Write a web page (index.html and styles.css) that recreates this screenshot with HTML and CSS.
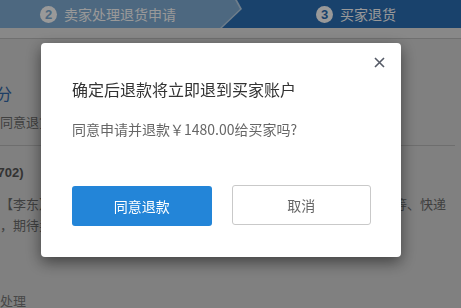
FILE: index.html
```html
<!DOCTYPE html>
<html lang="zh">
<head>
<meta charset="utf-8">
<link rel="stylesheet" href="styles.css">
</head>
<body>
<div class="page">
  <div class="steps">
    <div class="step step-done">
      <span class="num">2</span><span class="label">卖家处理退货申请</span>
    </div>
    <div class="step step-current">
      <span class="num">3</span><span class="label">买家退货</span>
    </div>
  </div>
  <div class="subbar"></div>
  <div class="content">
    <div class="sec-title">买家退货部分</div>
    <div class="note">同意退货申请后，等待买家退货</div>
    <div class="divider"></div>
    <div class="order">订单号(20190702)</div>
    <div class="row">
      <span>【李东】已申请退货，卖家同意后请买家尽快寄回商品</span>
      <span>等、快递</span>
    </div>
    <div class="row">
      <span>，期待卖家确认收货</span>
    </div>
    <div class="foot">处理</div>
  </div>
</div>

<div class="mask"></div>
<div class="dialog">
  <button class="close" aria-label="关闭">
    <svg width="11" height="11" viewBox="0 0 11 11"><path d="M1 1L10 10M10 1L1 10" stroke="#555a66" stroke-width="1.6" fill="none"/></svg>
  </button>
  <div class="title">确定后退款将立即退到买家账户</div>
  <div class="desc">同意申请并退款￥1480.00给买家吗?</div>
  <div class="actions">
    <button class="btn btn-primary">同意退款</button>
    <button class="btn btn-default">取消</button>
  </div>
</div>
</body>
</html>
```

FILE: styles.css
```css
* { box-sizing: border-box; }
html, body { margin: 0; padding: 0; }
body {
  width: 461px;
  height: 308px;
  overflow: hidden;
  background: #d5d5d5;
  font-family: "Noto Sans CJK SC", "Noto Sans", sans-serif;
}
.page { width: 461px; height: 308px; overflow: hidden; }

.steps {
  display: flex;
  height: 28px;
  background: #2a6eb4;
  position: relative;
}
.step {
  display: flex;
  align-items: center;
  height: 28px;
  color: #fff;
  font-size: 14px;
}
.step-done {
  position: relative;
  z-index: 1;
  width: 243px;
  padding-left: 40px;
  background: #b9d2e8;
  clip-path: polygon(0 0, 237px 0, 242px 9px, 222px 28px, 0 28px);
}
.step-done::before {
  content: "";
  position: absolute;
  inset: 0;
  z-index: -1;
  background: #80add5;
  clip-path: polygon(0 0, 235px 0, 240px 9px, 220px 28px, 0 28px);
}
.step-current {
  flex: 1;
  padding-left: 73px;
}
.num {
  width: 17px; height: 17px;
  border-radius: 50%;
  background: #fff;
  color: #80add5;
  font-size: 13px;
  font-weight: 700;
  display: flex; align-items: center; justify-content: center;
  margin-right: 7px;
  font-family: "Liberation Sans", sans-serif;
}
.step-current .num { color: #2a6eb4; }
.label { line-height: 1; }

.subbar {
  height: 11px;
  background: #e3e3e3;
  border-bottom: 1px solid #bbb;
}

.content { width: 461px; }
.sec-title {
  margin-top: 44px;
  margin-left: -84px;
  font-size: 16px;
  color: #3268a8;
  line-height: 20px;
  white-space: nowrap;
}
.note {
  margin-top: 10px;
  font-size: 13px;
  color: #6b6b6b;
  line-height: 18px;
  white-space: nowrap;
}
.divider {
  margin-top: 14px;
  height: 1px;
  width: 455px;
  background: #b8b8b8;
}
.order {
  margin-top: 18px;
  margin-left: -82px;
  font-family: "Liberation Sans", "Noto Sans CJK SC", sans-serif;
  font-size: 13px;
  font-weight: 700;
  color: #555;
  line-height: 18px;
  white-space: nowrap;
}
.row {
  display: flex;
  justify-content: space-between;
  width: 446px;
  font-size: 13px;
  color: #6b6b6b;
  line-height: 21px;
  white-space: nowrap;
}
.order + .row { margin-top: 11px; }
.foot {
  margin-top: 58px;
  font-size: 13px;
  color: #777;
  line-height: 16px;
}

.mask {
  position: fixed;
  inset: 0;
  z-index: 10;
  background: rgba(0,0,0,0.4);
}
.dialog {
  position: fixed;
  z-index: 11;
  left: 41px;
  top: 43px;
  width: 360px;
  height: 214px;
  background: #fff;
  border-radius: 4px;
  box-shadow: 0 5px 15px rgba(0,0,0,0.5);
  padding: 35px 30px 0 31px;
}
.close {
  position: absolute;
  right: 16px;
  top: 14px;
  width: 11px; height: 11px;
  padding: 0; border: 0; background: none;
  display: block;
}
.close svg { display: block; }
.title {
  font-size: 16px;
  color: #333;
  line-height: 22px;
}
.desc {
  margin-top: 19px;
  font-size: 14px;
  color: #666;
  line-height: 20px;
}
.actions {
  display: flex;
  gap: 20px;
  margin-top: 47px;
}
.btn {
  width: 140px;
  height: 40px;
  border-radius: 3px;
  font-family: "Noto Sans CJK SC", "Noto Sans", sans-serif;
  font-size: 14px;
  padding: 0;
}
.btn-primary {
  background: #2385d8;
  border: 0;
  color: #fff;
}
.btn-default {
  background: #fff;
  border: 1px solid #c9c9c9;
  color: #666;
  margin-top: -1px;
}
```
